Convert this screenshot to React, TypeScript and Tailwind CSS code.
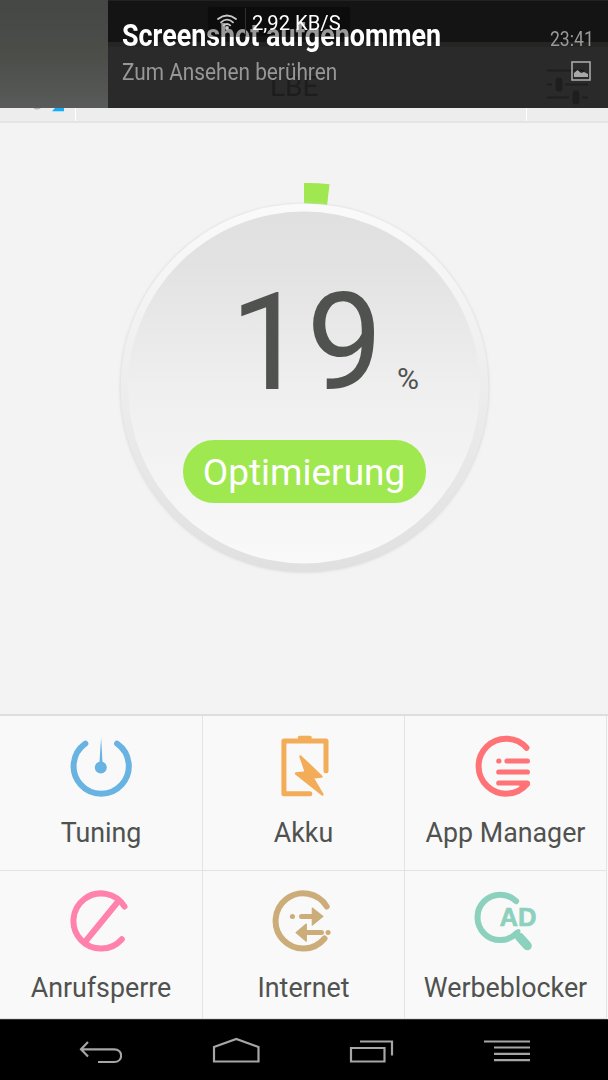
import type { ReactNode } from "react";

const iconProps = {
  width: 64,
  height: 64,
  viewBox: "0 0 64 64",
  fill: "none",
  strokeLinecap: "round" as const,
  strokeLinejoin: "round" as const,
};

function TuningIcon() {
  return (
    <svg {...iconProps} stroke="#69b3e3" strokeWidth="6">
      <path d="M16.3 8.6A27.6 27.6 0 1 0 48.1 8.6" />
      <circle cx="31.8" cy="32.5" r="6" fill="#69b3e3" stroke="none" />
      <path d="M32.1 2L33.6 29H30.4Z" fill="#69b3e3" stroke="none" />
    </svg>
  );
}

function BatteryIcon() {
  return (
    <svg {...iconProps} stroke="#f3ac58" strokeWidth="5">
      <path d="M37.8 58.7H11.9V6H54V35.8" />
      <path d="M27.5 2.6H38" strokeWidth="3.6" />
      <path d="M28.5 21.5L49.5 41.5L40.5 42.5L50.5 59.5L24 38.5L34 37.5Z" fill="#f3ac58" strokeWidth="2.4" />
    </svg>
  );
}

function AppsIcon() {
  return (
    <svg {...iconProps} stroke="#ff7377" strokeWidth="5.2">
      <path d="M52.5 12.7A27.5 27.5 0 1 0 53 49" strokeWidth="6" />
      <path d="M24.8 26h.1M33 26H53.4M24.8 37H53.4M24.8 48H53.4" />
      <path d="M53.5 48.5L49 52.5L46 50.5Z" fill="#ff7377" strokeWidth="2" />
    </svg>
  );
}

function CallBlockIcon() {
  return (
    <svg {...iconProps} stroke="#ff81ac" strokeWidth="6">
      <path d="M55.5 16.5A27.6 27.6 0 1 0 52.8 49.2" />
      <path d="M49.5 11L16 52" />
    </svg>
  );
}

function InternetIcon() {
  return (
    <svg {...iconProps} stroke="#ccad7a" strokeWidth="5">
      <path d="M54.7 16.5A27.6 27.6 0 1 0 52.5 48.5" strokeWidth="6" />
      <path d="M20.4 26.4h.1M29.5 26.4H40M32 42.6H49.5M56 42.6h.1" />
      <path d="M40.3 18L51 26.4L40.3 35Z" fill="#ccad7a" strokeWidth="1.2" />
      <path d="M34.3 34L24 42.6L34.3 51.2Z" fill="#ccad7a" strokeWidth="1.2" />
    </svg>
  );
}

function AdBlockIcon() {
  return (
    <svg {...iconProps} stroke="#8bd1bd" strokeWidth="6">
      <path d="M43.3 11.2A22.7 22.7 0 1 0 43.5 43.4" transform="translate(-1.2 0)" />
      <path d="M45.5 47L53.3 55.8" strokeWidth="9" />
      <path d="M41 43.5L44.5 41" strokeWidth="4" />
      <text
        x="25.5"
        y="36"
        fill="#8bd1bd"
        stroke="#8bd1bd"
        strokeWidth=".6"
        fontSize="25.5"
        fontWeight="700"
        textLength="37"
        lengthAdjust="spacingAndGlyphs"
        fontFamily="Liberation Sans, sans-serif"
      >
        AD
      </text>
    </svg>
  );
}

const tiles: { name: string; icon: ReactNode }[] = [
  { name: "Tuning", icon: <TuningIcon /> },
  { name: "Akku", icon: <BatteryIcon /> },
  { name: "App Manager", icon: <AppsIcon /> },
  { name: "Anrufsperre", icon: <CallBlockIcon /> },
  { name: "Internet", icon: <InternetIcon /> },
  { name: "Werbeblocker", icon: <AdBlockIcon /> },
];

function Notification() {
  return (
    <header className="relative flex h-[108px] shrink-0 overflow-hidden bg-[#2a2a2a]">
      <div className="w-[108px] shrink-0 bg-linear-to-b from-[#454745] via-[#4b4d49] to-[#595b5a]" />
      <div className="flex min-w-0 flex-1 flex-col">
        <div className="h-[42px] border-t border-[#222] bg-[#141414]" />
        <div className="h-[5px] bg-[#252523]" />
      </div>

      {/* Dimmed app bar underneath */}
      <span className="absolute left-[270px] top-[71px] text-[28px] leading-8 text-[#1d1d1d]">LBE</span>
      <svg className="absolute left-[546px] top-[64px]" width="44" height="42" stroke="#1e1e1e" strokeWidth="2">
        <path d="M1 6.5H38M1 20.5H6M19 20.5H42M1 33.5H23M36 33.5H42" />
        <path d="M13 17V24M30 30V37" strokeWidth="7" strokeLinecap="round" />
      </svg>

      <div className="absolute left-[122px] top-[15px] flex flex-col whitespace-nowrap">
        <span className="h-10 origin-left scale-x-[0.84] text-[32px] font-bold leading-10 text-white">
          Screenshot aufgenommen
        </span>
        <span className="mt-px h-8 origin-left scale-x-[0.867] text-2xl leading-8 text-[#979797]">
          Zum Ansehen berühren
        </span>
      </div>
      <div className="absolute right-[14px] top-[29px] flex flex-col items-end">
        <span className="origin-right scale-x-[0.88] text-xl leading-5 text-[#999]">23:41</span>
        <svg className="mt-[12px] mr-[3px]" width="20" height="20" fill="none">
          <rect x="1" y="1" width="18" height="18" stroke="#a8a8a8" strokeWidth="1.6" />
          <path d="M3 16V12L6.5 9L10 12L13 11L17 13V16Z" fill="#a8a8a8" />
        </svg>
      </div>

      {/* Network speed popup */}
      <div className="absolute left-[207px] top-1.5 flex h-[31px] w-[144px] items-center rounded-sm border border-white/3 bg-black/40 text-white">
        <svg className="ml-2 shrink-0" width="22" height="18" fill="none" stroke="#c9c9c9" strokeWidth="1.8" strokeLinecap="round">
          <path d="M2 6Q11-1 20 6M5 9.3Q11 4 17 9.3M7.8 12.4Q11 9.5 14.2 12.4" />
          <circle cx="11" cy="15" r="1" />
        </svg>
        <div className="ml-[7px] h-7 w-px bg-[#303030]" />
        <span className="ml-1.5 mt-[3px] origin-left scale-x-[1.01] whitespace-nowrap text-xl leading-7">2,92 KB/S</span>
      </div>
    </header>
  );
}

function Dial() {
  return (
    <section className="relative mx-auto mt-[59px] h-[400px] w-[400px]">
      <svg className="absolute inset-0" width="400" height="400">
        <defs>
          <linearGradient id="ring" x2="0" y2="1">
            <stop stopColor="#fafafa" />
            <stop offset="1" stopColor="#e0e0e0" />
          </linearGradient>
          <linearGradient id="face" x2="0" y2="1">
            <stop stopColor="#e0e0e0" />
            <stop offset=".15" stopColor="#e2e2e2" />
            <stop offset=".5" stopColor="#efefef" />
            <stop offset="1" stopColor="#f9f9f9" />
          </linearGradient>
          <filter id="soft">
            <feGaussianBlur stdDeviation="1.5" />
          </filter>
        </defs>
        <path d="M200 1Q212.5 .7 225.5 2.2L223 24H200Z" fill="#9fe850" />
        <circle cx="200.5" cy="206" r="184.5" fill="#d8d8d8" filter="url(#soft)" />
        <circle cx="200.5" cy="205.5" r="184" fill="url(#ring)" />
        <circle cx="200" cy="205.5" r="176" fill="url(#face)" />
      </svg>
      <div className="relative flex flex-col items-center">
        <div className="mt-[81px] flex h-[160px] items-baseline pl-[41px] text-[#50524f]">
          <span className="text-[136px] leading-[160px]">19</span>
          <span className="ml-[14px] text-[30px] leading-none">%</span>
        </div>
        <button className="mt-[17px] h-[63px] w-[243px] rounded-[31px] bg-[#9fe850] pt-[3px] text-[37px] leading-[60px] text-white">
          Optimierung
        </button>
      </div>
    </section>
  );
}

function NavBar() {
  return (
    <nav className="flex h-[61px] shrink-0 items-center justify-between border-t border-[#333] bg-black pl-[78px] pr-[76px]">
      <svg className="mt-1" width="44" height="26" fill="none" stroke="#a6a6a6" strokeWidth="2.2">
        <path d="M10 3L3 10.3L10 17.5M3 10.3H36C45.5 10.3 45.5 23 36 23H20" />
      </svg>
      <svg width="48" height="26" fill="none" stroke="#a6a6a6" strokeWidth="2.2">
        <path d="M2 24.5V10L24.3 2L46.5 10V24.5Z" />
      </svg>
      <svg width="45" height="26" fill="none" stroke="#a6a6a6" strokeWidth="2.2">
        <path d="M2 11H35.5V24.5H2ZM11 4.5H43V18.5" />
      </svg>
      <svg width="48" height="26" fill="none" stroke="#a6a6a6" strokeWidth="2.2">
        <path d="M0 4.5H46M10 10.5H46M10 16.8H46M10 23.2H46" />
      </svg>
    </nav>
  );
}

export default function App() {
  return (
    <div className="flex h-[1080px] w-[608px] flex-col overflow-hidden bg-[#f3f3f3] font-['Roboto',sans-serif]">
      <Notification />
      <div className="flex h-[15px] shrink-0 border-b-2 border-[#e4e4e4] bg-[#ededed]">
        <div className="w-[76px] border-r border-white">
          <svg width="75" height="6">
            <path d="M33 0Q37 3 41 0Z" fill="#b5b5b5" />
            <path d="M52 3.2L55 0H64V3.2Z" fill="#15adf8" />
          </svg>
        </div>
        <div className="w-[451px] border-r border-white" />
      </div>
      <main className="flex-1 overflow-hidden">
        <Dial />
      </main>
      <div className="grid h-[305px] shrink-0 grid-cols-[203px_202px_202px] grid-rows-[155px_148px] border-t-2 border-[#dedede] bg-[#f9f9f9]">
        {tiles.map((tile) => (
          <div
            key={tile.name}
            className="flex flex-col items-center whitespace-nowrap border-b border-r border-[#e3e3e3] pt-[19px] text-[26.8px] leading-8 text-[#50524f]"
          >
            {tile.icon}
            <span className="mt-[18px]">{tile.name}</span>
          </div>
        ))}
      </div>
      <NavBar />
    </div>
  );
}
